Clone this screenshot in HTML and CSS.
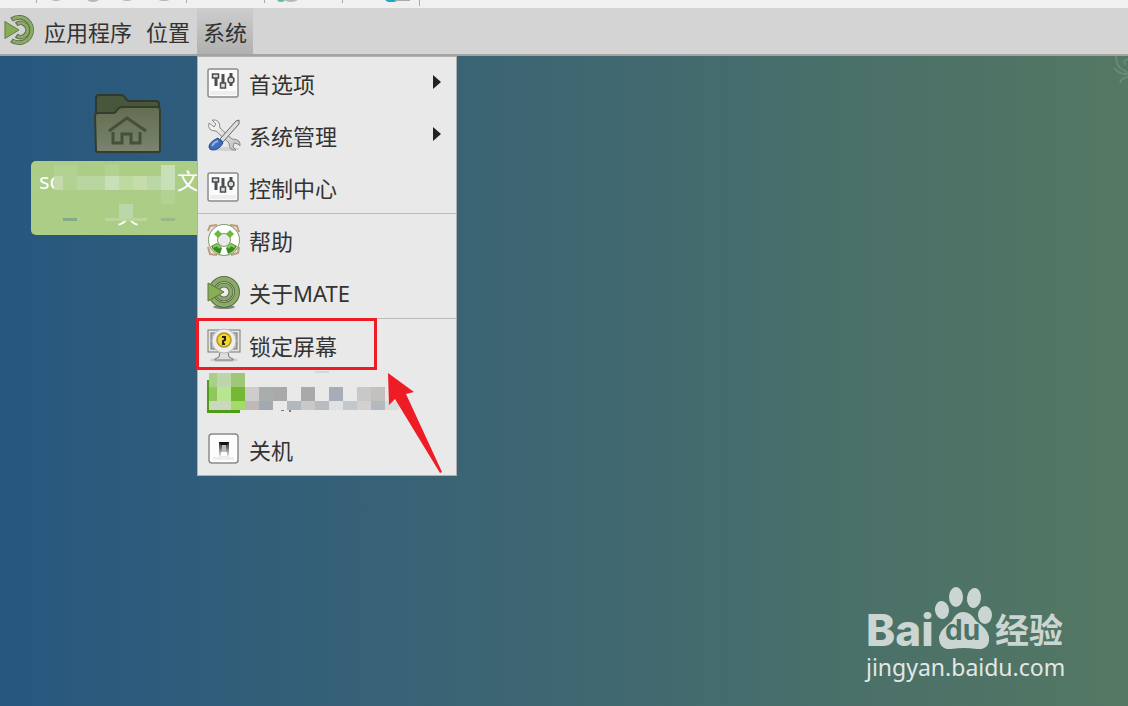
FILE: index.html
```html
<!DOCTYPE html>
<html lang="zh-CN">
<head>
    <meta charset="UTF-8">
    <meta name="viewport" content="width=device-width, initial-scale=1.0">
    <title>MATE</title>
    <link rel="stylesheet" href="styles.css">
</head>
<body>
    <svg class="defs" width="0" height="0" aria-hidden="true">
        <defs>
            <linearGradient id="folderFront" x1="0" y1="0" x2="0" y2="1">
                <stop offset="0" stop-color="#626e50"/>
                <stop offset="1" stop-color="#7a846f"/>
            </linearGradient>
            <linearGradient id="switchSide" x1="0" y1="0" x2="0" y2="1">
                <stop offset="0" stop-color="#222"/>
                <stop offset="1" stop-color="#eee"/>
            </linearGradient>
            <linearGradient id="blade" x1="0" y1="0" x2="1" y2="1">
                <stop offset="0" stop-color="#fff"/>
                <stop offset="1" stop-color="#bbb"/>
            </linearGradient>
            <symbol id="mate" viewBox="0 0 34 34">
                <g fill="none" stroke="#5b6b48" stroke-width="5">
                    <path d="M8 6A13.500 13.500 0 1 1 8 28"/>
                    <path d="M13 11A7.500 7.500 0 1 1 13 23"/>
                </g>
                <g fill="none" stroke="#8aab63" stroke-width="3">
                    <path d="M9 5.500A13.500 13.500 0 1 1 9 28.500"/>
                    <path d="M14 10.500A7.500 7.500 0 1 1 14 23.500"/>
                </g>
                <path d="M1 8v18L16 17z" fill="#87ae55" stroke="#5f7745"/>
            </symbol>
            <symbol id="prefs" viewBox="0 0 34 34">
                <rect x="1" y="3" width="30" height="28" rx="2" fill="#fbfbfb" stroke="#8b8b8b" stroke-width="1.500"/>
                <path d="M3 25h26v4H3z" fill="#eee"/>
                <g fill="#ddd" stroke="#4a4f51" stroke-width="1.500">
                    <path d="M9 12v8M16 8v10M24 7v13" stroke-width="3"/>
                    <path d="M5.500 8h6v4h-6z"/>
                    <path d="M13.500 17h5v5h-5z"/>
                    <circle cx="24" cy="14" r="3"/>
                </g>
            </symbol>
        </defs>
    </svg>

    <div class="toolbar" aria-hidden="true">
        <svg width="422" height="8" viewBox="0 0 422 8">
            <path d="M36.500 0v3M186.500 0v3M264.500 0v3M342.500 0v3M419.500 0v6" stroke="#aaa"/>
            <g fill="#b5b8b9">
                <ellipse cx="56" cy="-1" rx="5" ry="2"/>
                <ellipse cx="93" cy="-1" rx="6" ry="3"/>
                <ellipse cx="127" cy="-1" rx="5" ry="2"/>
                <ellipse cx="164" cy="-1" rx="6" ry="2"/>
                <ellipse cx="291" cy="-1" rx="7" ry="3"/>
            </g>
            <ellipse cx="281" cy="-1" rx="4" ry="3" fill="#66b9a4"/>
            <path d="M385 0h16l-7 2h-6z" fill="#20a8c6"/>
            <path d="M395 0h15v1h-15z" fill="#aaa"/>
        </svg>
    </div>

    <nav class="panel">
        <button type="button" class="panel-item brand">
            <svg width="32" height="34"><use href="#mate"/></svg>应用程序
        </button>
        <button type="button" class="panel-item">位置</button>
        <div class="dropdown">
            <button type="button" class="panel-item active">系统</button>
            <div class="menu">
                <button type="button" class="menu-item">
                    <svg class="icon"><use href="#prefs"/></svg>首选项<span class="caret"></span>
                </button>
                <button type="button" class="menu-item">
                    <svg class="icon" viewBox="0 0 34 34">
                        <ellipse cx="18" cy="31" rx="14" ry="2" fill="#d2d2d2"/>
                        <path d="M5 2L9 6 7 9 2 5Q0 13 9 13L22 25Q22 33 29 32L26 29 27 25 31 26 33 28Q34 21 25 21L13 10Q13 1 5 2z" fill="url(#blade)" stroke="#888"/>
                        <path d="M13 21L29 3l3-1v4L16 24z" fill="#ddd" stroke="#666"/>
                        <path d="M2 29q0-5 9-9l5 5q-4 7-10 7-4 0-4-3z" fill="#3f6eb8" stroke="#234b8a"/>
                        <path d="M5 28q2-4 6-5" fill="none" stroke="#8fb2e4" stroke-width="2"/>
                    </svg>系统管理<span class="caret"></span>
                </button>
                <button type="button" class="menu-item">
                    <svg class="icon"><use href="#prefs"/></svg>控制中心
                </button>
                <hr class="separator">
                <button type="button" class="menu-item">
                    <svg class="icon" viewBox="0 0 34 34">
                        <path d="M1 8L3 3 10 2M23 2l7 1 2 6M1 24l2 7 7 1M24 32l7-2 1-6" fill="none" stroke="#c09a7a" stroke-width="2"/>
                        <circle cx="17" cy="17" r="11" fill="none" stroke="#7f9f6f" stroke-width="10"/>
                        <circle cx="17" cy="17" r="11" fill="none" stroke="#fff" stroke-width="8"/>
                        <path d="M7 11L11 7l4 4-4 4zM23 7l4 4-4 4-4-4z" fill="#6cba3c"/>
                        <path d="M4 23l6-3 5 5-2 6q-6-2-9-8zM30 23l-6-3-5 5 2 6q6-2 9-8z" fill="#3d8a1c"/>
                        <path d="M6 24l4-2 3 3M28 24l-4-2-3 3" fill="none" stroke="#8acb5e" stroke-width="2"/>
                    </svg>帮助
                </button>
                <button type="button" class="menu-item">
                    <svg class="icon" viewBox="0 0 34 34">
                        <ellipse cx="17" cy="32" rx="11" ry="2" fill="#888"/>
                        <circle cx="17" cy="17" r="13" fill="none" stroke="#5b6b48" stroke-width="6"/>
                        <circle cx="17" cy="17" r="13" fill="none" stroke="#8aab63" stroke-width="4"/>
                        <circle cx="17" cy="17" r="7" fill="#eee" stroke="#5b6b48" stroke-width="5"/>
                        <circle cx="17" cy="17" r="7" fill="none" stroke="#8aab63" stroke-width="3"/>
                        <path d="M1 8v18L17 17z" fill="#87ae55" stroke="#5f7745"/>
                    </svg>关于MATE
                </button>
                <hr class="separator">
                <button type="button" class="menu-item marked">
                    <svg class="icon" viewBox="0 0 34 34">
                        <ellipse cx="17" cy="32" rx="14" ry="2" fill="#ccc"/>
                        <path d="M13 24h8l1 5 4 2v1H8v-1l4-2z" fill="#ddd" stroke="#777"/>
                        <rect x="1" y="2" width="32" height="22" fill="#e4e6df" stroke="#777a74"/>
                        <rect x="4" y="5" width="26" height="16" fill="#b5bab1" stroke="#777"/>
                        <circle cx="17" cy="13" r="12" fill="#eee" stroke="#bbb"/>
                        <circle cx="17" cy="12" r="7" fill="#f3d52f" stroke="#b49513" stroke-width="1.500"/>
                        <path d="M15 9h3v3l-2 1v3h2" fill="none" stroke="#222" stroke-width="2"/>
                    </svg>锁定屏幕
                </button>
                <button type="button" class="menu-item logout" aria-label="注销">
                    <svg class="mosaic" viewBox="207 370 200 44" width="200" height="44" shape-rendering="crispEdges">
                        <rect x="207" y="379" width="33" height="33" fill="#4e9c18"/>
                        <path d="M281 409h3v1h-3zM289 409h2v2h-2z" fill="#777"/>
                        <path d="M209 372h8v14h-8z" fill="#a9cf8a"/><path d="M217 372h14v14h-14z" fill="#bdd6a9"/><path d="M231 372h14v14h-14z" fill="#a0c677"/>
                        <path d="M209 386h8v14h-8z" fill="#90c75f"/><path d="M217 386h14v14h-14z" fill="#b8e690"/><path d="M231 386h14v14h-14z" fill="#76b835"/>
                        <path d="M209 400h22v9h-22z" fill="#cbd8bf"/><path d="M231 400h14v9h-14z" fill="#a1db68"/>
                        <path d="M245 386h14v14h-14z" fill="#cfcdcc"/><path d="M259 386h14v14h-14z" fill="#a9adad"/><path d="M273 386h14v14h-14zM301 386h14v14h-14z" fill="#aaa9a8"/>
                        <path d="M329 386h14v14h-14z" fill="#a6adb6"/><path d="M357 386h14v14h-14z" fill="#c9c8c7"/><path d="M371 386h14v14h-14z" fill="#c2c1bd"/>
                        <path d="M245 400h14v9h-14z" fill="#bdb9b6"/><path d="M259 400h14v9h-14z" fill="#a1a9b1"/><path d="M287 400h14v9h-14z" fill="#b3b8bd"/>
                        <path d="M301 400h14v9h-14z" fill="#c7c9cb"/><path d="M315 400h14v9h-14z" fill="#babbbf"/><path d="M329 400h14v9h-14z" fill="#e0e2e2"/>
                        <path d="M343 400h14v9h-14z" fill="#c4c8cb"/><path d="M357 400h14v9h-14z" fill="#d3d1d0"/><path d="M371 400h14v9h-14z" fill="#b3b9bc"/><path d="M385 400h14v9h-14z" fill="#dcdcdc"/>
                        <path d="M315 370h14v2h-14z" fill="#d8d6da"/>
                    </svg>
                </button>
                <button type="button" class="menu-item">
                    <svg class="icon" viewBox="0 0 34 34">
                        <rect x="2" y="2" width="29" height="29" rx="3" fill="#fcfcfc" stroke="#8a8a8a" stroke-width="1.500"/>
                        <path d="M6 25h21v3H6z" fill="#eee"/>
                        <rect x="12" y="10" width="10" height="15" fill="url(#switchSide)"/>
                        <path d="M12 10h10l-2 3h-6z" fill="#111"/>
                        <path d="M15 13h4v9h-4z" fill="#bbb"/>
                        <path d="M14 20h6v4h-6z" fill="#fff"/>
                    </svg>关机
                </button>
                <svg class="arrow" width="56" height="104" viewBox="0 0 56 104" aria-hidden="true">
                    <path d="M1 2L27 21 19 23 55 101 53 102 8 28 2 34z" fill="#ee1c24"/>
                </svg>
            </div>
        </div>
    </nav>

    <main class="desktop">
        <a href="#home" class="home-folder">
            <svg width="68" height="62" viewBox="0 0 68 62">
                <path d="M2 58V5q0-3 3-3h22q3 0 5 4l2 2h28q3 0 3 3v46z" fill="#48563b" stroke="#30392b" stroke-width="2"/>
                <path d="M1 23q0-3 3-3h15q3 0 4-3l2-2q1-1 4-1h34q3 0 3 3v40q0 2-2 2H4q-2 0-2-2z" fill="url(#folderFront)" stroke="#353e2e" stroke-width="2"/>
                <path d="M15 38L33 25l19 13M19 39v11h9V41h9v9h9V39" fill="none" stroke="#465039" stroke-width="3"/>
            </svg>
            <span class="folder-label">
                <span class="folder-line">sc<span>文</span></span>
                <span class="folder-line last">夹</span>
                <svg class="label-mosaic" width="121" height="58" viewBox="54 165 121 58" shape-rendering="crispEdges" aria-hidden="true">
                    <path d="M54 165h121v57H54z" fill="#abcd86"/>
                    <path d="M54 166h23v11h-23zM105 166h14v11h-14zM63 177h14v14h-14zM161 191h14v14h-14z" fill="#b2d292"/>
                    <path d="M54 177h9v14h-9z" fill="#c3dbaa"/>
                    <path d="M77 177h14v14h-14zM91 177h14v14h-14z" fill="#b9d6a0"/>
                    <path d="M105 177h14v14h-14zM161 166h14v25h-14z" fill="#c9dfb7"/>
                    <path d="M119 177h14v14h-14z" fill="#bfdaa0"/>
                    <path d="M133 177h14v14h-14z" fill="#c7dcab"/>
                    <path d="M147 177h14v14h-14zM119 205h14v14h-14z" fill="#bad7a8"/>
                    <path d="M105 219h42v3h-42z" fill="#b9d69c"/>
                    <path d="M63 219h14v3h-14z" fill="#86aa83"/>
                    <path d="M161 219h14v3h-14z" fill="#98b78b"/>
                </svg>
            </span>
        </a>

        <svg class="ornament" width="16" height="40" viewBox="0 0 16 40" fill="none" stroke="#658a77" stroke-width="2" aria-hidden="true">
            <path d="M4 0q0 8 4 12l8 5M2 12q6 7 14 6M16 3q-6 2-2 6M16 21q-7 1-8 6"/>
        </svg>

        <div class="watermark">
            <div class="logo">
                <svg class="paw" width="124" height="64" viewBox="0 0 124 64" fill="#cbd5d1" aria-hidden="true">
                    <ellipse cx="74" cy="24" rx="7" ry="9" transform="rotate(-8 74 24)"/>
                    <ellipse cx="88" cy="11" rx="7" ry="10"/>
                    <ellipse cx="106" cy="12" rx="7" ry="10" transform="rotate(8 106 12)"/>
                    <ellipse cx="117" cy="29" rx="7" ry="9"/>
                    <path d="M95 26q8 0 13 9 12 8 13 16 1 13-12 12-7-1-13-1t-13 1q-12 1-12-12 1-7 13-16 4-9 11-9z"/>
                </svg>
                <span class="logo-latin">Bai</span>
                <span class="logo-du">du</span>
                <span class="logo-cjk">经验</span>
            </div>
            <a href="#jingyan">jingyan.baidu.com</a>
        </div>
    </main>
</body>
</html>
```
FILE: styles.css
```css
body {
    font-family: "Noto Sans", "Noto Sans CJK SC", sans-serif;
    font-size: 22px;
    color: #333;
    margin: 0;
    min-height: 100vh;
    display: flex;
    flex-direction: column;
    overflow: hidden;
}

svg {
    display: block;
    flex: none;
}

button {
    font: inherit;
    color: inherit;
    border: none;
    background: none;
    white-space: nowrap;
}

a {
    color: inherit;
    text-decoration: none;
}

.defs {
    position: absolute;
}

.toolbar {
    height: 8px;
    background: #f0f0f0;
}

.panel {
    display: flex;
    height: 46px;
    background: #d4d4d4;
    border-bottom: 2px solid #a3a3a3;
}

.panel-item {
    display: flex;
    align-items: center;
    height: 46px;
    padding: 0 7px;
}

.brand {
    gap: 8px;
    padding-left: 4px;
}

.brand svg {
    margin-bottom: 2px;
}

.active {
    padding: 0 6px;
    background: linear-gradient(#cdcdcd, #b0b0b0);
}

.dropdown {
    position: relative;
}

.menu {
    position: absolute;
    z-index: 1;
    top: 48px;
    left: 0;
    width: 260px;
    box-sizing: border-box;
    background: #e9e9e9;
    border: 1px solid #b0b0b0;
}

.menu-item {
    position: relative;
    display: flex;
    align-items: center;
    gap: 8px;
    width: 100%;
    height: 52px;
    padding: 0 15px 0 9px;
    text-align: left;
}

.icon {
    width: 34px;
    height: 34px;
}

.caret {
    margin-left: auto;
    margin-bottom: 2px;
    border: 7px solid transparent;
    border-left: 8px solid #222;
    border-right: none;
}

.logout {
    align-items: flex-start;
}

.separator {
    margin: 0;
    border: none;
    border-top: 1px solid #bcbcbc;
}

/* frame around the lock screen entry */
.marked::after {
    content: "";
    position: absolute;
    inset: -1px 79px 1px -2px;
    border: 3px solid #ee1c24;
}

.arrow {
    position: absolute;
    right: 13px;
    bottom: 0;
}

.desktop {
    position: relative;
    flex: 1;
    background: linear-gradient(90deg, #27577f, #3b6474 42%, #4a7069 76%, #547863);
}

.home-folder {
    position: absolute;
    top: 37px;
    left: 31px;
    width: 194px;
    display: flex;
    flex-direction: column;
    align-items: center;
    gap: 6px;
    color: #fff;
}

.folder-label {
    position: relative;
    box-sizing: border-box;
    width: 100%;
    height: 74px;
    padding: 2px 8px;
    border-radius: 5px;
    background: #abcd86;
}

.folder-line {
    display: flex;
    justify-content: space-between;
    line-height: 34px;
    padding-right: 18px;
}

.last {
    justify-content: center;
    padding: 0;
}

.label-mosaic {
    position: absolute;
    top: 3px;
    left: 23px;
}

.ornament {
    position: absolute;
    top: 0;
    right: 0;
}

.watermark {
    position: absolute;
    right: 60px;
    bottom: 22px;
    width: 202px;
    color: #e2e8e5;
}

.watermark a {
    display: block;
    font-size: 23px;
    line-height: 34px;
}

.logo {
    position: relative;
    display: flex;
    align-items: flex-end;
    height: 64px;
    color: #cbd5d1;
    line-height: 40px;
}

.paw {
    position: absolute;
    top: 0;
    left: 2px;
}

.logo-latin {
    width: 79px;
    font-family: Inter, sans-serif;
    font-size: 44px;
    font-weight: 800;
}

.logo-du {
    position: relative;
    width: 50px;
    font-family: Inter, sans-serif;
    font-size: 28px;
    font-weight: 700;
    color: #4c726a;
}

.logo-cjk {
    font-size: 34px;
    font-weight: 700;
}
```
